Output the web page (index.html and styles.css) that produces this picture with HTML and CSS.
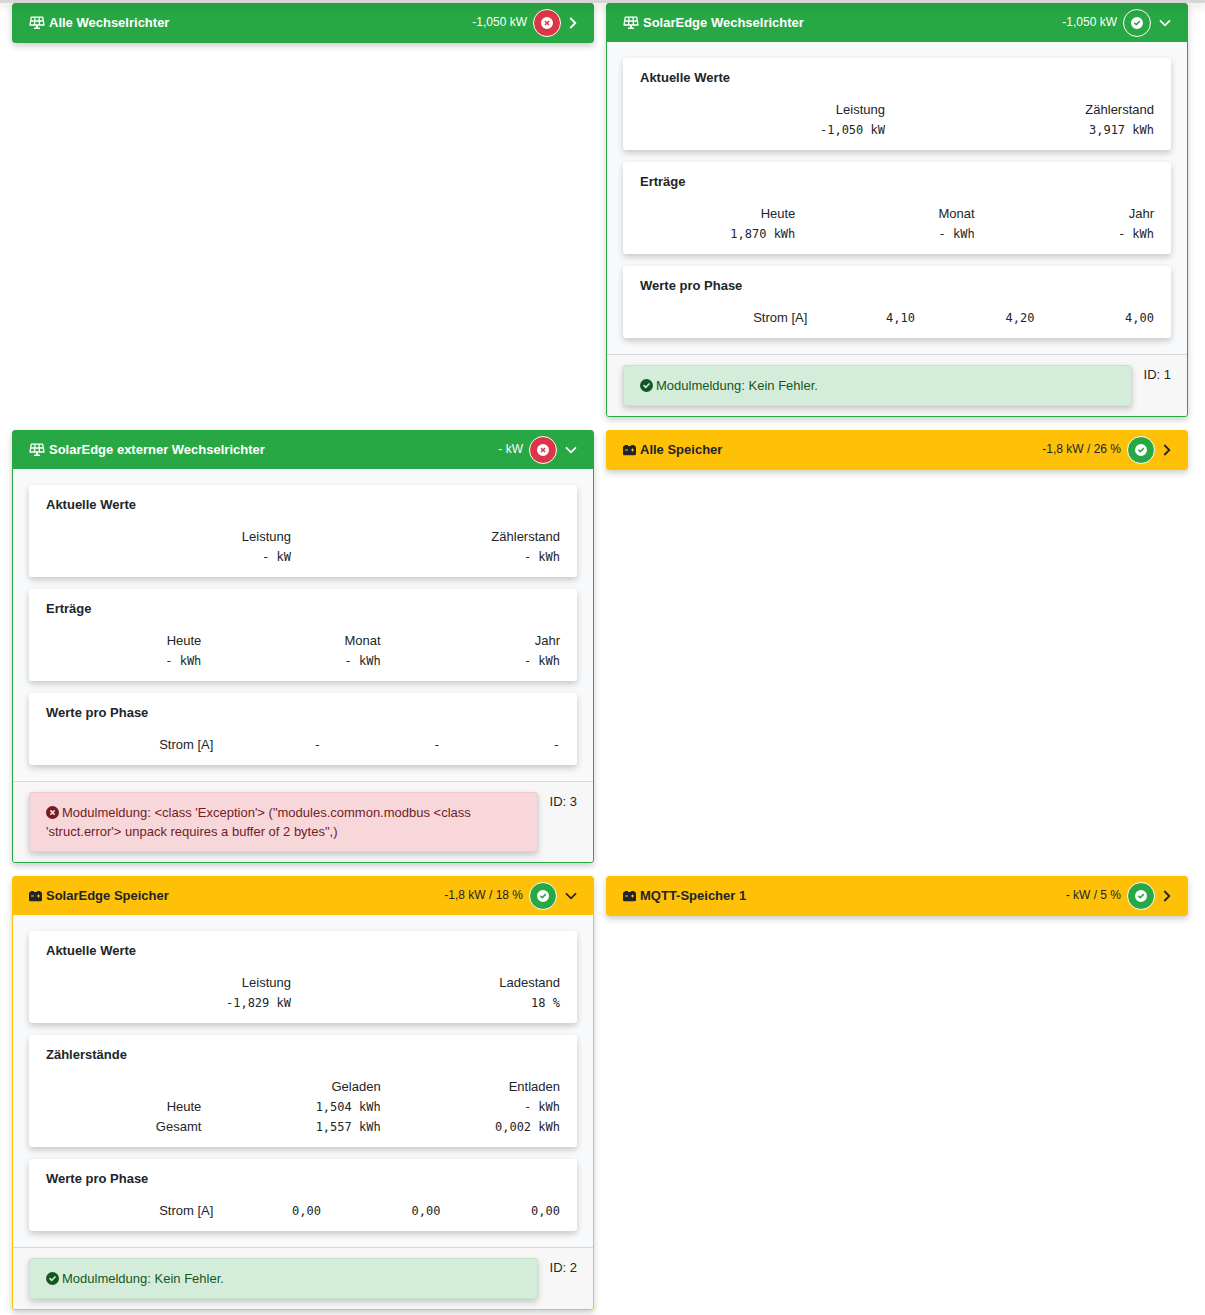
FILE: index.html
```
<!DOCTYPE html>
<html lang="de">
<head>
<meta charset="utf-8">
<meta name="viewport" content="width=device-width, initial-scale=1">
<title>Status</title>
<link rel="stylesheet" href="styles.css">
</head>
<body>
<svg class="sprite" aria-hidden="true">
  <symbol id="solar" viewBox="0 0 16 14">
    <path d="M2.300 1.200H13.700L15 9H1Z M1.700 5H14.300 M6 1.200L5.500 9 M10 1.200L10.500 9" fill="none" stroke="currentColor" stroke-width="1.3" stroke-linejoin="round"/>
    <path d="M7 9H9V11.600H11V13H5V11.600H7Z" fill="currentColor"/>
  </symbol>
  <symbol id="battery" viewBox="0 0 13 11">
    <path fill-rule="evenodd" fill="currentColor" d="M2 0H4.500Q5 0 5 .5V1H8V.5Q8 0 8.500 0H11Q11.500 0 11.500 .5V1Q13 1 13 2.300V9Q13 10.300 11.700 10.300H1.300Q0 10.300 0 9V2.300Q0 1 1.500 1V.5Q1.500 0 2 0ZM2 4.500V5.600H5V4.500ZM9 3.500V4.500H8V5.600H9V6.600H10V5.600H11V4.500H10V3.500Z"/>
  </symbol>
  <symbol id="check" viewBox="0 0 16 16">
    <path fill-rule="evenodd" fill="currentColor" d="M8 0a8 8 0 1 0 0 16a8 8 0 1 0 0-16ZM3.700 8.300L5.100 6.900L7 8.800L11 4.800L12.400 6.200L7 11.600Z"/>
  </symbol>
  <symbol id="cross" viewBox="0 0 16 16">
    <path fill-rule="evenodd" fill="currentColor" d="M8 0a8 8 0 1 0 0 16a8 8 0 1 0 0-16ZM6 4.600L8 6.600L10 4.600L11.400 6L9.400 8L11.400 10L10 11.400L8 9.400L6 11.400L4.600 10L6.600 8L4.600 6Z"/>
  </symbol>
  <symbol id="right" viewBox="0 0 8 12">
    <path d="M1.300 1L6.300 6L1.300 11" fill="none" stroke="currentColor" stroke-width="1.800"/>
  </symbol>
  <symbol id="down" viewBox="0 0 12 8">
    <path d="M1 1.300L6 6.300L11 1.300" fill="none" stroke="currentColor" stroke-width="1.800"/>
  </symbol>
</svg>

<header class="topbar"></header>

<main class="cards">
  <section class="card inverter">
    <div class="card-header">
      <h2 class="title"><svg class="icon-solar"><use href="#solar"/></svg>Alle Wechselrichter</h2>
      <span class="summary">-1,050 kW</span>
      <span class="badge error"><svg class="icon-badge"><use href="#cross"/></svg></span>
      <button class="toggle" type="button" aria-label="Aufklappen"><svg class="icon-right"><use href="#right"/></svg></button>
    </div>
  </section>

  <section class="card inverter">
    <div class="card-header">
      <h2 class="title"><svg class="icon-solar"><use href="#solar"/></svg>SolarEdge Wechselrichter</h2>
      <span class="summary">-1,050 kW</span>
      <span class="badge ok"><svg class="icon-badge"><use href="#check"/></svg></span>
      <button class="toggle" type="button" aria-label="Zuklappen"><svg class="icon-down"><use href="#down"/></svg></button>
    </div>
    <div class="card-body">
      <div class="panel">
        <h3>Aktuelle Werte</h3>
        <table>
          <tr><th scope="col">Leistung</th><th scope="col">Zählerstand</th></tr>
          <tr><td>-1,050 kW</td><td>3,917 kWh</td></tr>
        </table>
      </div>
      <div class="panel">
        <h3>Erträge</h3>
        <table>
          <tr><th scope="col">Heute</th><th scope="col">Monat</th><th scope="col">Jahr</th></tr>
          <tr><td>1,870 kWh</td><td>- kWh</td><td>- kWh</td></tr>
        </table>
      </div>
      <div class="panel">
        <h3>Werte pro Phase</h3>
        <table class="phases">
          <tr><th scope="row">Strom [A]</th><td>4,10</td><td>4,20</td><td>4,00</td></tr>
        </table>
      </div>
    </div>
    <div class="card-footer">
      <p class="alert success"><svg class="icon-alert"><use href="#check"/></svg>Modulmeldung: Kein Fehler.</p>
      <span>ID: 1</span>
    </div>
  </section>

  <section class="card inverter">
    <div class="card-header">
      <h2 class="title"><svg class="icon-solar"><use href="#solar"/></svg>SolarEdge externer Wechselrichter</h2>
      <span class="summary">- kW</span>
      <span class="badge error"><svg class="icon-badge"><use href="#cross"/></svg></span>
      <button class="toggle" type="button" aria-label="Zuklappen"><svg class="icon-down"><use href="#down"/></svg></button>
    </div>
    <div class="card-body">
      <div class="panel">
        <h3>Aktuelle Werte</h3>
        <table>
          <tr><th scope="col">Leistung</th><th scope="col">Zählerstand</th></tr>
          <tr><td>- kW</td><td>- kWh</td></tr>
        </table>
      </div>
      <div class="panel">
        <h3>Erträge</h3>
        <table>
          <tr><th scope="col">Heute</th><th scope="col">Monat</th><th scope="col">Jahr</th></tr>
          <tr><td>- kWh</td><td>- kWh</td><td>- kWh</td></tr>
        </table>
      </div>
      <div class="panel">
        <h3>Werte pro Phase</h3>
        <table class="phases">
          <tr><th scope="row">Strom [A]</th><td>-</td><td>-</td><td>-</td></tr>
        </table>
      </div>
    </div>
    <div class="card-footer">
      <p class="alert danger"><svg class="icon-alert"><use href="#cross"/></svg>Modulmeldung: &lt;class 'Exception'&gt; ("modules.common.modbus &lt;class 'struct.error'&gt; unpack requires a buffer of 2 bytes",)</p>
      <span>ID: 3</span>
    </div>
  </section>

  <section class="card storage">
    <div class="card-header">
      <h2 class="title"><svg class="icon-battery"><use href="#battery"/></svg>Alle Speicher</h2>
      <span class="summary">-1,8 kW / 26 %</span>
      <span class="badge ok"><svg class="icon-badge"><use href="#check"/></svg></span>
      <button class="toggle" type="button" aria-label="Aufklappen"><svg class="icon-right"><use href="#right"/></svg></button>
    </div>
  </section>

  <section class="card storage">
    <div class="card-header">
      <h2 class="title"><svg class="icon-battery"><use href="#battery"/></svg>SolarEdge Speicher</h2>
      <span class="summary">-1,8 kW / 18 %</span>
      <span class="badge ok"><svg class="icon-badge"><use href="#check"/></svg></span>
      <button class="toggle" type="button" aria-label="Zuklappen"><svg class="icon-down"><use href="#down"/></svg></button>
    </div>
    <div class="card-body">
      <div class="panel">
        <h3>Aktuelle Werte</h3>
        <table>
          <tr><th scope="col">Leistung</th><th scope="col">Ladestand</th></tr>
          <tr><td>-1,829 kW</td><td>18 %</td></tr>
        </table>
      </div>
      <div class="panel">
        <h3>Zählerstände</h3>
        <table>
          <tr><td></td><th scope="col">Geladen</th><th scope="col">Entladen</th></tr>
          <tr><th scope="row">Heute</th><td>1,504 kWh</td><td>- kWh</td></tr>
          <tr><th scope="row">Gesamt</th><td>1,557 kWh</td><td>0,002 kWh</td></tr>
        </table>
      </div>
      <div class="panel">
        <h3>Werte pro Phase</h3>
        <table class="phases">
          <tr><th scope="row">Strom [A]</th><td>0,00</td><td>0,00</td><td>0,00</td></tr>
        </table>
      </div>
    </div>
    <div class="card-footer">
      <p class="alert success"><svg class="icon-alert"><use href="#check"/></svg>Modulmeldung: Kein Fehler.</p>
      <span>ID: 2</span>
    </div>
  </section>

  <section class="card storage">
    <div class="card-header">
      <h2 class="title"><svg class="icon-battery"><use href="#battery"/></svg>MQTT-Speicher 1</h2>
      <span class="summary">- kW / 5 %</span>
      <span class="badge ok"><svg class="icon-badge"><use href="#check"/></svg></span>
      <button class="toggle" type="button" aria-label="Aufklappen"><svg class="icon-right"><use href="#right"/></svg></button>
    </div>
  </section>
</main>
</body>
</html>
```

FILE: styles.css
```
* { box-sizing: border-box; }

body {
  margin: 0;
  background: #fff;
  color: #212529;
  font: 13px/20px "Liberation Sans", Arial, sans-serif;
}

.sprite { display: none; }

.topbar {
  position: relative;
  z-index: 1;
  height: 3px;
  background: #d6d6d6;
  box-shadow: 0 3px 8px rgba(0, 0, 0, .2);
}

.cards {
  display: grid;
  grid-template-columns: 1fr 1fr;
  align-items: start;
  gap: 13px 12px;
  padding: 0 17px 6px 12px;
}

.card {
  --accent: #28a745;
  border: 1px solid var(--accent);
  border-radius: 3px;
  background: #f8f9fa;
  box-shadow: 0 3px 6px rgba(0, 0, 0, .2);
}
.storage { --accent: #ffc107; }

.card-header {
  display: flex;
  align-items: center;
  padding: 5px 16px;
  background: var(--accent);
  color: #fff;
}
.storage .card-header { color: #212529; }

.title {
  display: flex;
  align-items: center;
  gap: 4px;
  flex: 1;
  margin: 0;
  font-size: 13px;
}
.summary {
  padding-bottom: 2px;
  font-size: 12px;
}

.badge {
  display: flex;
  align-items: center;
  justify-content: center;
  width: 28px;
  height: 28px;
  margin: 0 8px 0 6px;
  border: 1px solid #fff;
  border-radius: 50%;
  color: #fff;
}
.ok { background: #28a745; }
.error { background: #dc3545; }

.toggle {
  display: flex;
  padding: 0;
  border: 0;
  background: none;
  color: inherit;
}

.icon-solar { width: 16px; height: 14px; }
.icon-battery { width: 13px; height: 11px; }
.icon-badge { width: 12px; height: 12px; }
.icon-right { width: 8px; height: 12px; }
.icon-down { width: 12px; height: 8px; }
.icon-alert {
  width: 13px;
  height: 13px;
  margin-right: 3px;
  vertical-align: -2px;
}

.card-body {
  display: grid;
  gap: 12px;
  padding: 16px;
}

.panel {
  padding: 10px 17px;
  border-radius: 3px;
  background: #fff;
  box-shadow: 0 3px 6px rgba(0, 0, 0, .2);
}
.panel h3 {
  margin: 0 0 12px;
  font-size: 13px;
  line-height: 20px;
}

table {
  width: calc(100% + 24px);
  margin: 0 -12px;
  border-collapse: collapse;
  table-layout: fixed;
}
th, td {
  height: 20px;
  padding: 0 12px;
  text-align: right;
  line-height: 20px;
}
th { font-weight: normal; }
td {
  font-family: Consolas, "DejaVu Sans Mono", monospace;
  font-size: 12px;
}
.phases th {
  width: 33.33%;
  padding-right: 0;
}

.card-footer {
  display: flex;
  align-items: flex-start;
  gap: 12px;
  padding: 10px 16px;
  border-top: 1px solid #d6d8d9;
  border-radius: 0 0 3px 3px;
  background: #f7f7f7;
}

.alert {
  flex: 1;
  margin: 0;
  padding: 10px 16px;
  border: 1px solid;
  border-radius: 3px;
  line-height: 19px;
  box-shadow: 0 3px 6px rgba(0, 0, 0, .2);
}
.success {
  border-color: #c3e6cb;
  background: #d4edda;
  color: #155724;
}
.danger {
  border-color: #f5c6cb;
  background: #f8d7da;
  color: #721c24;
}
```
